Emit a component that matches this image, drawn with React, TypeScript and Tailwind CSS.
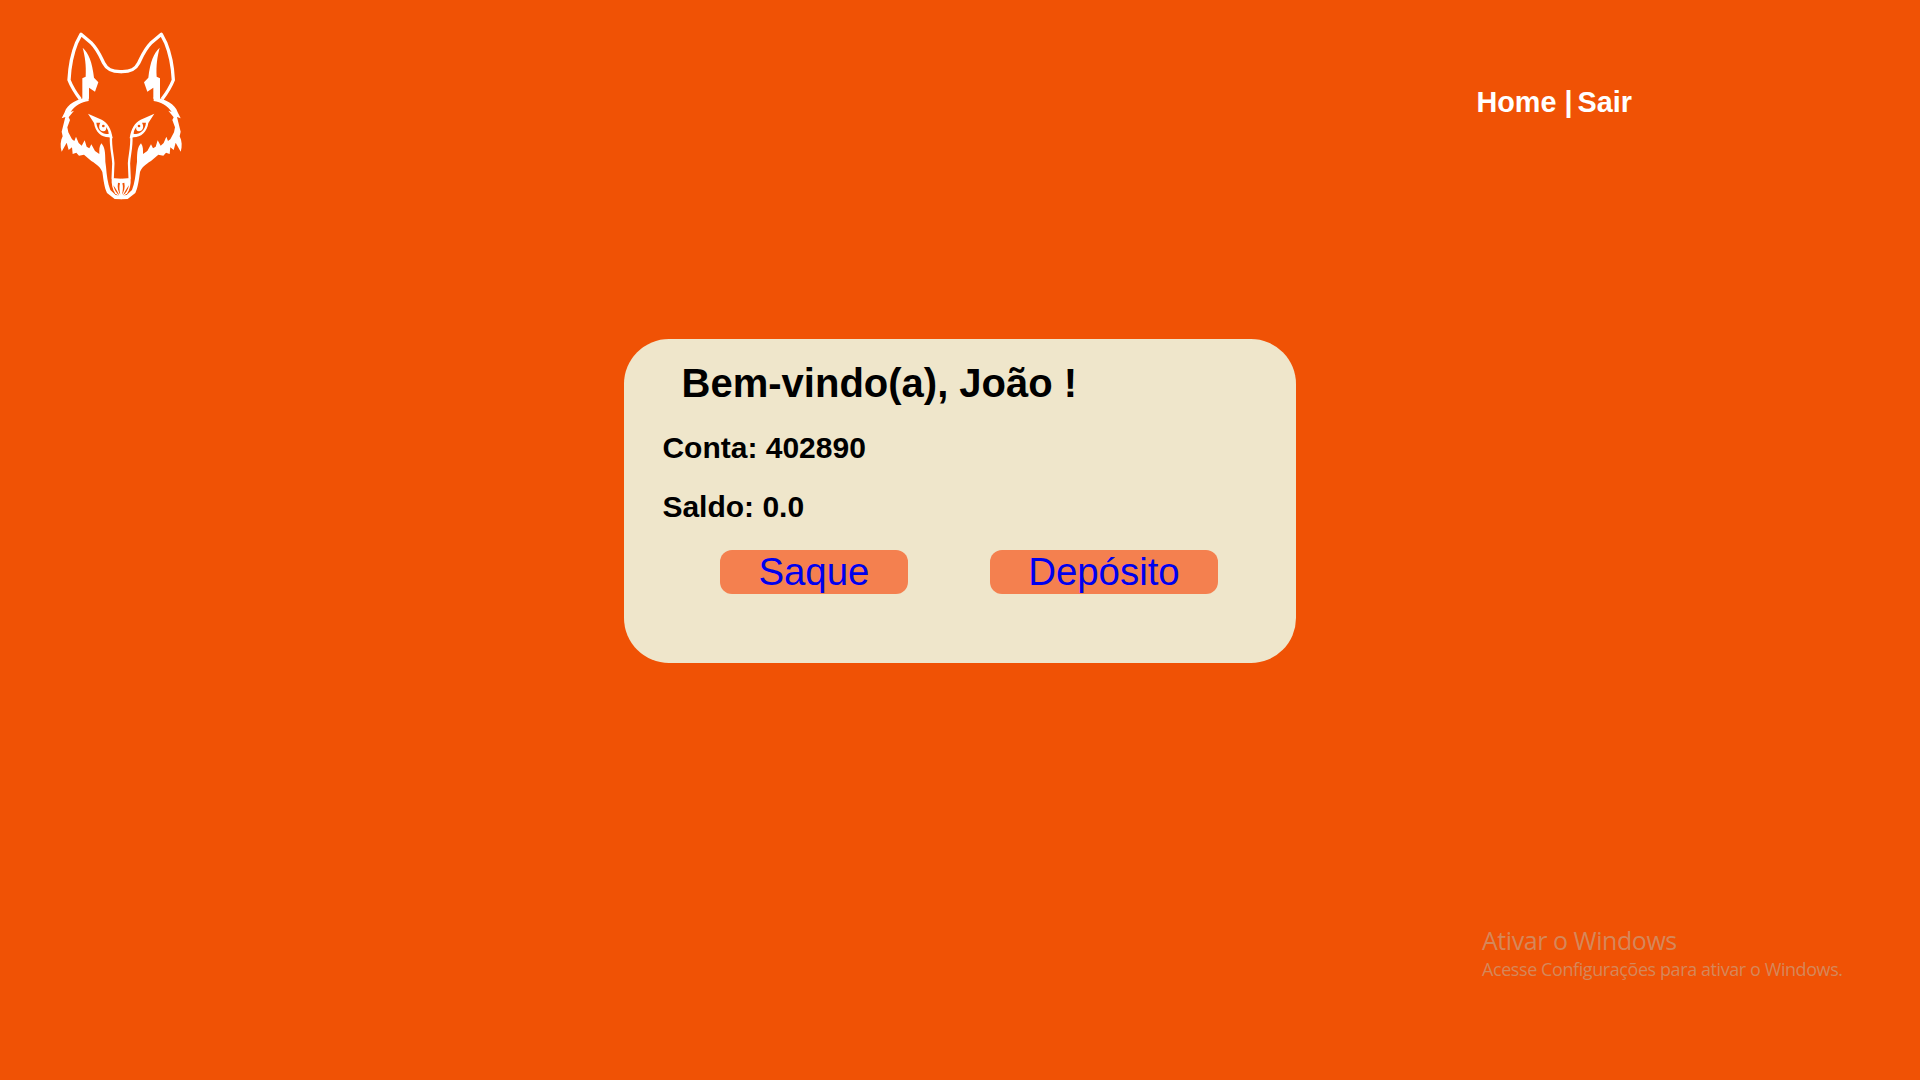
function WolfHalf() {
  return (
    <g>
      <path
        d="M214.5 155C184 156 170 147 161 129C151 108 143 88 125 70L93 43L80 68C66 102 59 140 57 180C66 203 76 218 91 238"
        fill="none"
        stroke="#fff"
        strokeWidth="10"
        strokeLinejoin="round"
      />
      <path d="M98 83C116 100 126 124 132 173L145 187L135 215L117 203V236L97 238V175L107 170C109 135 105 110 98 83Z" fill="#fff" />
      <path
        d="M116 232C82 236 51 253 44 277L35 295L46 291L35 335L38 349C31 362 30 380 35 395L50 368L56 390L66 382L68 402L79 398L87 407L102 404L124 423C142 434 152 443 157 456C161 484 163 502 171 519L194 537L214.5 538V527L197 525L181 510C173 490 170 465 168 440L166 425C166 395 164 381 154 370C147 380 148 390 148 402L135 393L124 373L118 385L110 380L104 361L95 377L86 369L78 350L73 363L66 358L55 337L52 322L60 300L56 292L72 272L62 276C74 257 94 246 116 243Z"
        fill="#fff"
      />
      <path d="M114 281L155 299C172 307 184 326 188 355L176 352C154 352 136 336 132 309Z" fill="#fff" />
      <path d="M139 308L151 308C144 320 148 333 160 334C167 333 170 329 168 321C174 329 176 335 176 342C155 342 142 331 139 308Z" fill="#f05205" />
      <circle cx="160" cy="318" r="4" fill="#f05205" />
      <path d="M183 350C181 382 189 405 190 430L188 476" fill="none" stroke="#fff" strokeWidth="7" />
      <path d="M185 474L214.5 476V533L195 520C188 509 184 494 185 474Z" fill="#fff" />
      <path d="M190 496C193 511 199 519 208 526C201 513 197 505 190 496Z" fill="#f05205" />
      <path d="M210 490L204 488C201 502 205 515 211 524C208 511 207 500 210 490Z" fill="#f05205" />
    </g>
  );
}

function WolfLogo() {
  return (
    <svg className="h-[190px] w-[145px]" viewBox="0 0 435 570" aria-hidden="true">
      <WolfHalf />
      <g transform="translate(427 0) scale(-1 1)">
        <WolfHalf />
      </g>
    </svg>
  );
}

const actions = ["Saque", "Depósito"];

export default function App() {
  return (
    <div className="flex h-[1080px] w-[1920px] flex-col overflow-hidden bg-[#f05205] font-['Liberation_Sans',Arial,sans-serif]">
      <header className="flex h-[339px] items-start justify-between pt-5 pr-[288px] pl-[50px]">
        <WolfLogo />
        <nav className="mt-[66px] flex text-[28.8px] leading-[33px] font-bold text-white">
          <a href="#">Home</a>
          <span className="mr-[5px] ml-[8px]">|</span>
          <a href="#">Sair</a>
        </nav>
      </header>

      <main className="mx-auto h-[324px] w-[672px] rounded-[45px] bg-[#efe6cb] px-[38.4px] pt-[21px] text-black">
        <h1 className="ml-[19.2px] text-[40px] leading-[46px] font-bold">Bem-vindo(a), João !</h1>
        <p className="mt-[25px] text-[30px] leading-[34px] font-bold">Conta: 402890</p>
        <p className="mt-[25px] text-[30px] leading-[34px] font-bold">Saldo: 0.0</p>
        <div className="mt-[26px] ml-[57.6px] flex gap-[82px]">
          {actions.map((label) => (
            <a key={label} href="#" className="h-[44px] rounded-xl bg-[#f4804f] px-[38.4px] text-[38.4px] leading-[44px] text-[#0000ee]">
              {label}
            </a>
          ))}
        </div>
      </main>

      <aside className="mt-auto mb-[99px] ml-[1482px] font-['Open_Sans',sans-serif] whitespace-nowrap text-[#d5875a]">
        <p className="text-[25px] leading-[34px] tracking-[-0.45px]">Ativar o Windows</p>
        <p className="text-[18px] leading-[24px] tracking-[-0.42px]">Acesse Configurações para ativar o Windows.</p>
      </aside>
    </div>
  );
}
